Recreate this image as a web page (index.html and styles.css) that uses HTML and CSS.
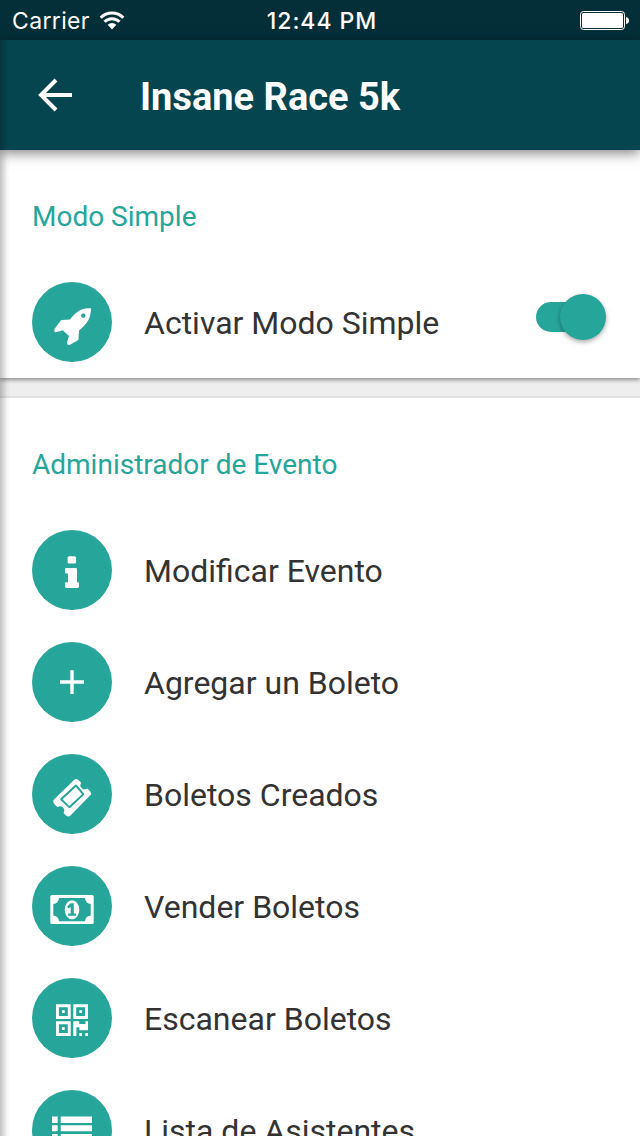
FILE: index.html
```html
<!DOCTYPE html>
<html lang="es">
<head>
<meta charset="utf-8">
<title>Insane Race 5k</title>
<link rel="stylesheet" href="styles.css">
</head>
<body>
<div class="screen">
  <div class="status">
    <div class="carrier"><span>Carrier</span>
      <svg width="26" height="20" viewBox="0 0 26 20"><g fill="none" stroke="#fff" stroke-width="3"><path d="M1.700 6.700a16 16 0 0 1 22.600 0"/><path d="M5.500 10.800a10.600 10.600 0 0 1 15 0"/></g><path d="M8.700 13.700a6.200 6.200 0 0 1 8.600 0L13 18.400z" fill="#fff"/></svg>
    </div>
    <span class="clock">12:44 PM</span>
    <svg class="battery" width="50" height="20" viewBox="0 0 50 20"><rect x=".5" y=".5" width="44" height="18" rx="3" fill="none" stroke="#fff"/><rect x="2" y="2" width="41" height="15" rx="1.5" fill="#fff"/><path d="M46 6q3 .5 3 3.500t-3 3.500z" fill="#fff"/></svg>
  </div>
  <header class="bar">
    <svg class="back" width="36" height="34" viewBox="0 0 36 34"><path d="M34 17H3M18 2L3 17L18 32" fill="none" stroke="#fff" stroke-width="4"/></svg>
    <h1>Insane Race 5k</h1>
  </header>
  <main>
    <section class="card simple">
      <h2>Modo Simple</h2>
      <div class="row">
        <svg class="icon" viewBox="0 0 80 80"><path fill-rule="evenodd" d="M59 26.300Q53.500 26 49.500 27.500Q43 30.500 38 37.500L30 38.100Q28.800 38.200 28.200 39.200L22.500 47Q21.500 50 24 50.300L30.700 48.200L37 54L35 60.500Q35 63.200 37.500 63L45.500 58.600Q46.500 58 46.500 57L47 48.500Q56 41.500 58 34Q59 30 59 26.300zM51.300 31.500a2.200 2.200 0 1 0 .01 0z"/></svg>
        <span class="label">Activar Modo Simple</span>
        <span class="switch"><span class="knob"></span></span>
      </div>
    </section>
    <section class="card admin">
      <h2>Administrador de Evento</h2>
      <div class="row">
        <svg class="icon" viewBox="0 0 80 80"><rect x="35.600" y="26.300" width="8.500" height="7.300" rx="1.500"/><path d="M34.300 38H43.600Q45 38 45 39.400V52.300H45.700Q47 52.300 47 53.700V56.600Q47 58 45.700 58H34.300Q33 58 33 56.600V53.700Q33 52.300 34.300 52.300H36V43.600H34.300Q33 43.600 33 42.200V39.400Q33 38 34.300 38z"/></svg>
        <span class="label">Modificar Evento</span>
      </div>
      <div class="row">
        <svg class="icon" viewBox="0 0 80 80"><path d="M38.300 28.300h3.400v10h10.300v3.400H41.700V52h-3.400V41.700H28v-3.400h10.300z"/></svg>
        <span class="label">Agregar un Boleto</span>
      </div>
      <div class="row">
        <svg class="icon" viewBox="0 0 80 80"><path d="M42 25.900Q44.300 24 46.500 26L49.200 28.800Q47.300 32 49.500 34Q52 36.500 55.300 34.500L58.300 37.500Q60 39.500 58 41.500L38.500 61.500Q36.300 63.500 34 61.500L31.500 58.900Q33.300 55.800 31 53.500Q28.700 51.300 25.500 53.200L22 49.700Q20.300 47.500 22 45.600z"/><path class="cut" d="M43 30.900Q44 30.200 44.900 31.100L51.800 39.200Q52.600 40.200 51.700 41.200L38.300 53.800Q37.300 54.600 36.300 53.600L28.600 46.200Q27.800 45.200 28.700 44.200z"/><path d="M43.900 32.900L50 40.200L37.200 52.100L30.600 45.300z"/></svg>
        <span class="label">Boletos Creados</span>
      </div>
      <div class="row">
        <svg class="icon" viewBox="0 0 80 80"><rect x="18.300" y="29" width="43.400" height="29" rx="1.500"/><path class="cut" d="M27 32H53Q53.500 37.500 58.700 38V49.500Q53.500 50 53 55.200H27Q26.500 50 21.300 49.500V38Q26.500 37.500 27 32z"/><ellipse cx="40" cy="43.700" rx="7.300" ry="9.500"/><path class="cut" d="M38.600 37.300h3.200v10.200h2.300v2.300h-8v-2.300h2.600V41l-2.300 1.500-1.300-1.900z"/></svg>
        <span class="label">Vender Boletos</span>
      </div>
      <div class="row">
        <svg class="icon" viewBox="0 0 80 80"><path fill-rule="evenodd" d="M24 26.300h14.700V41H24zM26.900 29.200v8.900h8.900v-8.900zM41.300 26.300H56V41H41.300zM44.200 29.200v8.900h8.900v-8.900zM24 43.300h14.700V58H24zM26.900 46.200v8.900h8.900v-8.900z"/><path d="M30 32.300h2.700V35H30zM47.300 32.300H50V35h-2.700zM30 49.300h2.700V52H30zM41.300 43.300h6v2.800h6v-2.800H56v9h-8.600v-3h-3V58h-3.100zM47.300 55h2.700v3h-2.700zM53.300 55H56v3h-2.700z"/><path class="cut" d="M47.300 43.300h3v1h-3zM50.300 43.300h3v2.800h-3z"/></svg>
        <span class="label">Escanear Boletos</span>
      </div>
      <div class="row">
        <svg class="icon" viewBox="0 0 80 80"><path d="M20 26.500h5.700V33H20zM28.700 26.500H60V33H28.700zM20 35.300h5.700v6H20zM28.700 35.300H60v6H28.700zM20 44h5.700v6H20zM28.700 44H60v6H28.700z"/></svg>
        <span class="label">Lista de Asistentes</span>
      </div>
    </section>
  </main>
  <div class="edge"></div>
</div>
</body>
</html>
```
FILE: styles.css
```css
* { box-sizing: border-box; }
html, body { margin: 0; height: 1136px; overflow: hidden; }
body { font-family: Roboto, sans-serif; background: #eee; color: #333; }
.screen { position: relative; width: 640px; height: 1136px; overflow: hidden; }
.status {
  display: grid; grid-template-columns: 1fr auto 1fr; align-items: center;
  height: 40px; padding: 2px 10px 0 12px;
  background: #042f38; color: #fff;
  font: 400 23px/38px Inter, sans-serif;
}
.carrier { display: flex; align-items: center; gap: 9px; letter-spacing: .35px; }
.clock { font-weight: 500; letter-spacing: .95px; margin-left: 2px; }
.battery { justify-self: end; }
.bar {
  position: relative; z-index: 1;
  display: flex; align-items: center; height: 110px; padding-left: 38px;
  background: #054550; color: #fff;
  box-shadow: 0 3px 12px rgba(0,0,0,.5);
}
.bar h1 { margin: 4px 0 0 66px; font-size: 38px; line-height: 44px; font-weight: 700; white-space: nowrap; }
.card { background: #fff; padding: 49px 32px 0; }
.simple { position: relative; height: 228px; box-shadow: 0 2px 4px rgba(0,0,0,.4); }
.admin { margin-top: 18px; border-top: 2px solid #e2e2e2; height: 760px; }
.card h2 { margin: 0 0 47px; font-size: 28px; line-height: 36px; font-weight: 400; color: #26a69a; white-space: nowrap; }
.row { display: flex; align-items: center; height: 80px; margin-bottom: 32px; }
.icon { flex: none; width: 80px; height: 80px; border-radius: 50%; background: #26a69a; fill: #fff; }
.cut { fill: #26a69a; }
.label { margin: 2px 0 0 32px; font-size: 32px; line-height: 40px; white-space: nowrap; }
.switch {
  display: flex; justify-content: flex-end; align-items: center;
  width: 70px; height: 30px; margin: -10px 2px 0 auto;
  background: linear-gradient(#26a69a, #26a69a) 0 0 / 46px 30px no-repeat;
  border-radius: 15px;
}
.knob { flex: none; width: 46px; height: 46px; border-radius: 50%; background: #26a69a; box-shadow: 0 2px 5px rgba(0,0,0,.35); }
.edge {
  position: absolute; z-index: 2; left: 0; top: 40px; width: 10px; height: 1096px;
  background: linear-gradient(90deg, rgba(0,0,0,.24), rgba(0,0,0,.14) 35%, rgba(0,0,0,.04) 70%, transparent);
}
```
